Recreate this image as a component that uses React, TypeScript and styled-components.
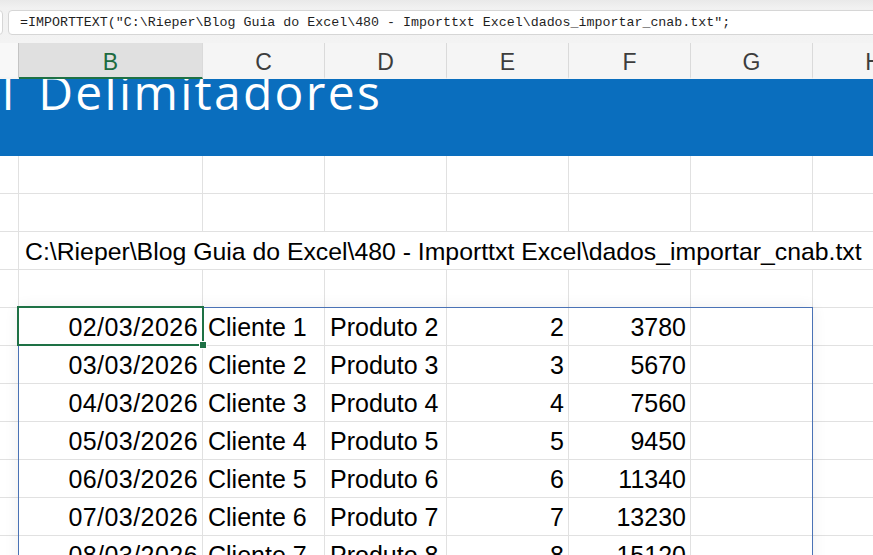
import React, { FC } from 'react';
import styled, { createGlobalStyle } from 'styled-components';

const GlobalStyle = createGlobalStyle`
  html, body {
    margin: 0;
    padding: 0;
    background: #ffffff;
    overflow: hidden;
  }
  body {
    font-family: 'Liberation Sans', Arial, sans-serif;
  }
`;

const COLUMNS = ['', 'B', 'C', 'D', 'E', 'F', 'G', 'H'];
const GRID = '19px 184px repeat(6, 122px)';
const SELECTED_COLUMN = 'B';

const FORMULA =
  '=IMPORTTEXT("C:\\Rieper\\Blog Guia do Excel\\480 - Importtxt Excel\\dados_importar_cnab.txt";';
const FILE_PATH = 'C:\\Rieper\\Blog Guia do Excel\\480 - Importtxt Excel\\dados_importar_cnab.txt';

type DataRow = [string, string, string, number, number];

const rows: DataRow[] = [
  ['02/03/2026', 'Cliente 1', 'Produto 2', 2, 3780],
  ['03/03/2026', 'Cliente 2', 'Produto 3', 3, 5670],
  ['04/03/2026', 'Cliente 3', 'Produto 4', 4, 7560],
  ['05/03/2026', 'Cliente 4', 'Produto 5', 5, 9450],
  ['06/03/2026', 'Cliente 5', 'Produto 6', 6, 11340],
  ['07/03/2026', 'Cliente 6', 'Produto 7', 7, 13230],
  ['08/03/2026', 'Cliente 7', 'Produto 8', 8, 15120],
];

const App: FC = () => {
  return (
    <>
      <GlobalStyle />
      <Window>
        <FormulaArea>
          <NameBox />
          <FormulaBox>{FORMULA}</FormulaBox>
        </FormulaArea>

        <HeaderRow>
          {COLUMNS.map((col, i) => (
            <ColumnHeader key={i} selected={col === SELECTED_COLUMN} corner={i === 0}>
              {col}
            </ColumnHeader>
          ))}
        </HeaderRow>

        <TitleBand>
          <TitleText>l Delimitadores</TitleText>
        </TitleBand>

        <EmptyRow />
        <EmptyRow />
        <Row>
          <Cell />
          <PathCell>{FILE_PATH}</PathCell>
        </Row>
        <EmptyRow />

        <DataBlock>
          {rows.map(([date, client, product, qty, total]) => (
            <Row key={date}>
              <Cell />
              <Cell align="right" date>
                {date}
              </Cell>
              <Cell>{client}</Cell>
              <Cell>{product}</Cell>
              <Cell align="right">{qty}</Cell>
              <Cell align="right">{total}</Cell>
              <Cell />
              <Cell />
            </Row>
          ))}
          <SpillBorder />
          <ActiveCell>
            <FillHandle />
          </ActiveCell>
        </DataBlock>
      </Window>
    </>
  );
};

const EmptyRow: FC = () => (
  <Row>
    {COLUMNS.map((_, i) => (
      <Cell key={i} />
    ))}
  </Row>
);

export default App;

const Window = styled.div`
  width: 873px;
  height: 555px;
  overflow: hidden;
  background: #ffffff;
`;

const FormulaArea = styled.div`
  box-sizing: border-box;
  height: 43px;
  padding-top: 10px;
  display: flex;
  gap: 5px;
  background: linear-gradient(#e9e9e9 0px, #f1f1f1 8px, #f3f3f3 100%);
`;

const NameBox = styled.div`
  box-sizing: border-box;
  width: 44px;
  height: 25px;
  margin-left: -41px;
  background: #ffffff;
  border: 1px solid #d6d6d6;
  border-radius: 4px;
`;

const FormulaBox = styled.div`
  box-sizing: border-box;
  flex: 1;
  height: 25px;
  margin-right: -10px;
  padding-left: 11px;
  background: #ffffff;
  border: 1px solid #d6d6d6;
  border-radius: 4px;
  font-family: 'Liberation Mono', 'DejaVu Sans Mono', monospace;
  font-size: 13.3px;
  line-height: 23px;
  color: #1f1f1f;
  white-space: nowrap;
  overflow: hidden;
`;

const HeaderRow = styled.div`
  display: grid;
  grid-template-columns: ${GRID};
  height: 36px;
  background: #f5f5f5;
`;

const ColumnHeader = styled.div<{ selected?: boolean; corner?: boolean }>`
  box-sizing: border-box;
  display: flex;
  align-items: center;
  justify-content: center;
  padding-top: 4px;
  font-family: 'Liberation Sans', Arial, sans-serif;
  font-size: 23px;
  color: ${p => (p.selected ? '#1d6b40' : '#3d3d3d')};
  background: ${p => (p.selected ? '#e0e0e0' : p.corner ? '#f8f8f8' : '#f5f5f5')};
  border-right: 1px solid ${p => (p.corner ? '#c4c4c4' : '#dadada')};
  border-bottom: 2px solid ${p => (p.selected ? '#1e7145' : '#f5f5f5')};
`;

const TitleBand = styled.div`
  height: 77px;
  overflow: hidden;
  background: #0a6ebe;
`;

const TitleText = styled.div`
  padding-left: 2px;
  font-family: 'Open Sans', 'Liberation Sans', sans-serif;
  font-weight: 400;
  font-size: 48px;
  letter-spacing: 2.3px;
  word-spacing: 7px;
  line-height: 25px;
  color: #ffffff;
  white-space: nowrap;
`;

const Row = styled.div`
  display: grid;
  grid-template-columns: ${GRID};
  height: 38px;
`;

const Cell = styled.div<{ align?: 'left' | 'right'; date?: boolean }>`
  box-sizing: border-box;
  height: 38px;
  padding: 1px ${p => (p.align === 'right' ? '4px' : '0')} 0 ${p => (p.align === 'right' ? '0' : '5px')};
  border-right: 1px solid #e1e1e1;
  border-bottom: 1px solid #e1e1e1;
  font-family: 'Liberation Sans', Arial, sans-serif;
  font-size: 25px;
  letter-spacing: ${p => (p.date ? '0.45px' : '0')};
  line-height: 37px;
  color: #000000;
  text-align: ${p => p.align ?? 'left'};
  white-space: nowrap;
`;

const PathCell = styled.div`
  grid-column: 2 / -1;
  box-sizing: border-box;
  height: 38px;
  padding: 1px 0 0 6px;
  border-bottom: 1px solid #e1e1e1;
  font-family: 'Liberation Sans', Arial, sans-serif;
  font-size: 24.8px;
  line-height: 37px;
  color: #000000;
  white-space: nowrap;
`;

const DataBlock = styled.div`
  position: relative;
`;

// dynamic array spill range outline, B:G
const SpillBorder = styled.div`
  position: absolute;
  top: -1px;
  left: 18px;
  width: 795px;
  height: 400px;
  box-sizing: border-box;
  border: 1px solid #4a72b5;
  box-shadow: 0 0 14px rgba(0, 0, 0, 0.07);
  pointer-events: none;
`;

const ActiveCell = styled.div`
  position: absolute;
  top: -2px;
  left: 17px;
  width: 187px;
  height: 40px;
  box-sizing: border-box;
  border: 2px solid #1e7145;
`;

const FillHandle = styled.div`
  position: absolute;
  right: -5px;
  bottom: -5px;
  width: 6px;
  height: 6px;
  background: #1e7145;
  border: 1px solid #ffffff;
`;
